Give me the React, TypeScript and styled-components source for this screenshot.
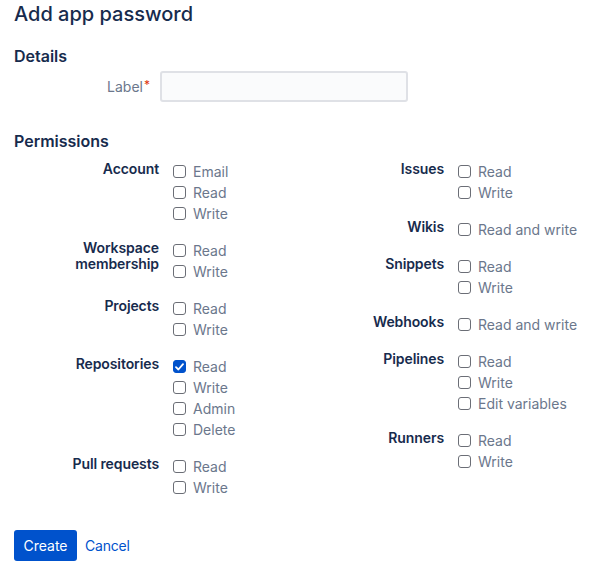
import React from 'react';
import styled, { createGlobalStyle } from 'styled-components';

const GlobalStyle = createGlobalStyle`
  html, body {
    margin: 0;
    padding: 0;
    background: #fff;
  }
  body {
    font-family: Inter, "Noto Sans", "Liberation Sans", sans-serif;
    color: #172b4d;
  }
`;

const Page = styled.div`
  padding: 0 14px;
`;

const Title = styled.h1`
  margin: 0;
  font-size: 20px;
  line-height: 28px;
  font-weight: 500;
  color: #172b4d;
`;

const SectionTitle = styled.h2<{ $top: number }>`
  margin: ${(p) => p.$top}px 0 0;
  font-size: 16px;
  line-height: 20px;
  font-weight: 600;
  color: #172b4d;
`;

const FieldRow = styled.div`
  display: grid;
  grid-template-columns: 136px 248px;
  column-gap: 10px;
  align-items: center;
  margin-top: 5px;
`;

const FieldLabel = styled.label`
  text-align: right;
  font-size: 14px;
  line-height: 16px;
  color: #6b778c;
`;

const Required = styled.span`
  color: #de350b;
  margin-left: 1px;
  vertical-align: top;
  font-size: 12px;
  line-height: 12px;
`;

const TextInput = styled.input`
  box-sizing: border-box;
  height: 31px;
  width: 248px;
  border: 2px solid #dfe1e6;
  border-radius: 3px;
  background: #fafbfc;
  outline: none;
  padding: 0 6px;
  font: inherit;
`;

const Columns = styled.div`
  display: grid;
  grid-template-columns: 285px 285px;
  margin-top: 10px;
`;

const Column = styled.div`
  display: flex;
  flex-direction: column;
  gap: 16px;
`;

const Group = styled.div`
  display: grid;
  grid-template-columns: 145px 1fr;
  column-gap: 14px;
`;

const GroupLabel = styled.div`
  text-align: right;
  font-size: 14px;
  line-height: 16px;
  font-weight: 600;
  letter-spacing: -0.1px;
  color: #172b4d;
`;

const Options = styled.div`
  display: flex;
  flex-direction: column;
`;

const Option = styled.label`
  display: flex;
  align-items: center;
  gap: 7px;
  height: 21px;
  font-size: 14px;
  color: #6b778c;
  white-space: nowrap;
`;

const Box = styled.span<{ $checked?: boolean }>`
  box-sizing: border-box;
  width: 13px;
  height: 13px;
  border-radius: 3px;
  border: 1px solid ${(p) => (p.$checked ? '#0052cc' : '#6b6e76')};
  background: ${(p) => (p.$checked ? '#0052cc' : '#fff')};
  display: flex;
  align-items: center;
  justify-content: center;
  flex-shrink: 0;
`;

const Actions = styled.div`
  display: flex;
  align-items: center;
  gap: 8px;
  margin-top: 32px;
`;

const PrimaryButton = styled.button`
  height: 31px;
  width: 63px;
  padding: 0;
  border: none;
  border-radius: 3px;
  background: #0052cc;
  color: #fff;
  font: inherit;
  font-size: 14px;
`;

const LinkButton = styled.button`
  border: none;
  background: none;
  padding: 0;
  color: #0052cc;
  font: inherit;
  font-size: 14px;
  letter-spacing: -0.2px;
`;

type Perm = { label: React.ReactNode; options: string[]; checked?: string[] };

const left: Perm[] = [
  { label: 'Account', options: ['Email', 'Read', 'Write'] },
  { label: <>Workspace<br />membership</>, options: ['Read', 'Write'] },
  { label: 'Projects', options: ['Read', 'Write'] },
  { label: 'Repositories', options: ['Read', 'Write', 'Admin', 'Delete'], checked: ['Read'] },
  { label: 'Pull requests', options: ['Read', 'Write'] },
];

const right: Perm[] = [
  { label: 'Issues', options: ['Read', 'Write'] },
  { label: 'Wikis', options: ['Read and write'] },
  { label: 'Snippets', options: ['Read', 'Write'] },
  { label: 'Webhooks', options: ['Read and write'] },
  { label: 'Pipelines', options: ['Read', 'Write', 'Edit variables'] },
  { label: 'Runners', options: ['Read', 'Write'] },
];

const Check = () => (
  <svg width="9" height="8" viewBox="0 0 9 8">
    <path d="M1 4.2 L3.4 6.5 L8 1.2" fill="none" stroke="#fff" strokeWidth="1.8" strokeLinecap="round" strokeLinejoin="round" />
  </svg>
);

const PermColumn = ({ groups }: { groups: Perm[] }) => (
  <Column>
    {groups.map((g, i) => (
      <Group key={i}>
        <GroupLabel>{g.label}</GroupLabel>
        <Options>
          {g.options.map((o) => {
            const on = g.checked?.includes(o);
            return (
              <Option key={o}>
                <Box $checked={on}>{on && <Check />}</Box>
                {o}
              </Option>
            );
          })}
        </Options>
      </Group>
    ))}
  </Column>
);

const App = () => (
  <Page>
    <GlobalStyle />
    <Title>Add app password</Title>
    <SectionTitle $top={18}>Details</SectionTitle>
    <FieldRow>
      <FieldLabel>
        Label<Required>*</Required>
      </FieldLabel>
      <TextInput />
    </FieldRow>
    <SectionTitle $top={29}>Permissions</SectionTitle>
    <Columns>
      <PermColumn groups={left} />
      <PermColumn groups={right} />
    </Columns>
    <Actions>
      <PrimaryButton>Create</PrimaryButton>
      <LinkButton>Cancel</LinkButton>
    </Actions>
  </Page>
);

export default App;
